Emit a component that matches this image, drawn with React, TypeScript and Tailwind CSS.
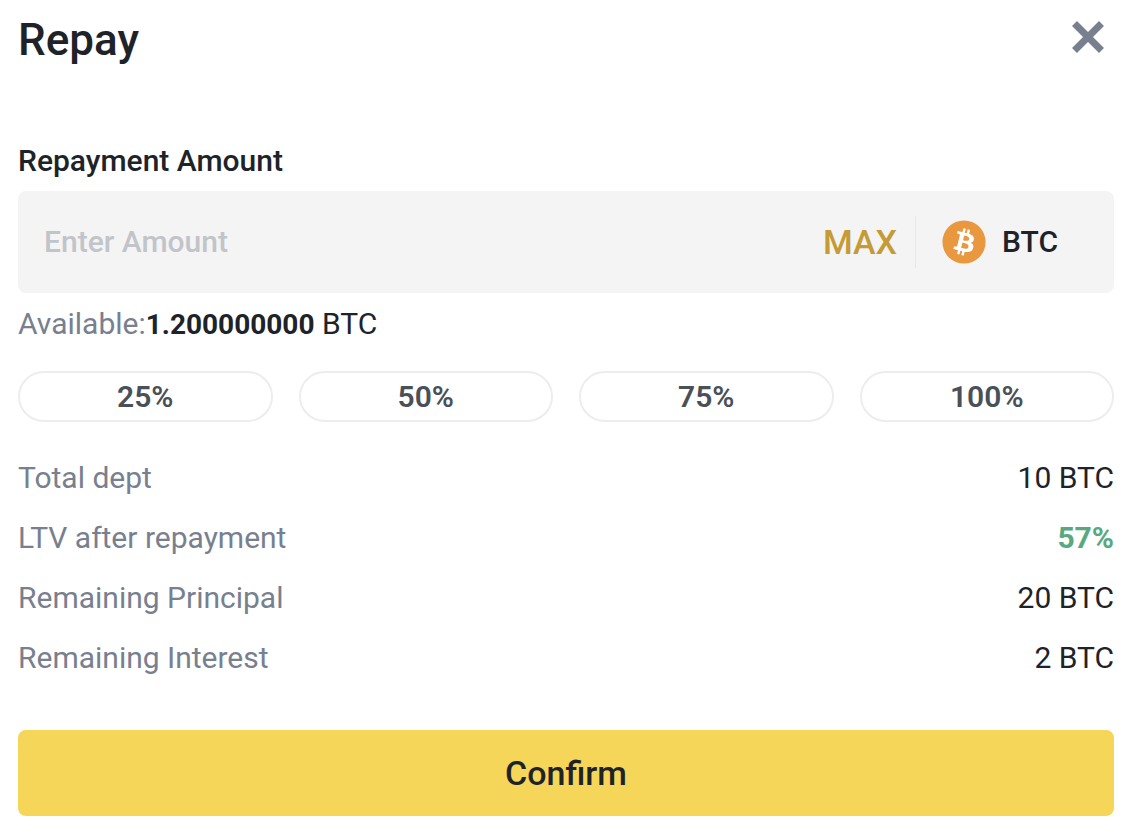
import { useState } from 'react';

const AVAILABLE = 1.2;

const percentages = [25, 50, 75, 100];

const summary = [
  { label: 'Total dept', value: '10 BTC' },
  { label: 'LTV after repayment', value: '57%', highlight: true },
  { label: 'Remaining Principal', value: '20 BTC' },
  { label: 'Remaining Interest', value: '2 BTC' },
];

function CloseIcon() {
  return (
    <svg viewBox="0 0 32 32" className="size-8" fill="none" stroke="currentColor" strokeWidth="7" aria-hidden="true">
      <path d="M2.5 2.5 29.5 29.5M29.5 2.5 2.5 29.5" />
    </svg>
  );
}

function BitcoinIcon() {
  return (
    <svg viewBox="0 0 32 32" className="size-11" aria-hidden="true">
      <circle cx="16" cy="16" r="15.7" fill="#e9983f" />
      <path
        fill="#fff"
        d="M23.189 14.02c.314-2.096-1.283-3.223-3.465-3.975l.708-2.84-1.728-.43-.69 2.765c-.454-.114-.92-.22-1.385-.326l.695-2.783L15.596 6l-.708 2.839c-.376-.086-.746-.17-1.104-.26l.002-.009-2.384-.595-.46 1.846s1.283.294 1.256.312c.7.175.826.638.805 1.006l-.806 3.235c.048.012.11.03.18.057l-.183-.045-1.13 4.532c-.086.212-.303.531-.793.41.018.025-1.256-.313-1.256-.313l-.858 1.978 2.25.561c.418.105.828.215 1.231.318l-.715 2.872 1.727.43.708-2.84c.472.127.93.245 1.378.357l-.706 2.828 1.728.43.715-2.866c2.948.558 5.164.333 6.097-2.333.752-2.146-.037-3.385-1.588-4.192 1.13-.26 1.98-1.003 2.207-2.538zm-3.95 5.538c-.533 2.147-4.148.986-5.32.695l.95-3.805c1.172.293 4.929.872 4.37 3.11zm.535-5.569c-.487 1.953-3.495.96-4.47.717l.86-3.45c.975.243 4.118.696 3.61 2.733z"
      />
    </svg>
  );
}

export default function App() {
  const [amount, setAmount] = useState('');

  const fillPercent = (percent: number) => {
    setAmount(String((AVAILABLE * percent) / 100));
  };

  return (
    <main className="min-h-screen bg-white pt-2.5 pr-5 pb-[18px] pl-[18px] font-['Roboto',sans-serif] text-[30px] leading-10 text-[#1e2329]">
      <header className="flex items-start justify-between">
        <h1 className="text-[44px] leading-[60px] font-medium">Repay</h1>
        <button type="button" aria-label="Close" className="mt-[11px] mr-2.5 text-[#78808f]">
          <CloseIcon />
        </button>
      </header>

      <form onSubmit={(e) => e.preventDefault()}>
        {/* Amount */}
        <label htmlFor="amount" className="mt-[71px] block font-medium">
          Repayment Amount
        </label>
        <div className="mt-2.5 flex h-[102px] items-center rounded-lg bg-[#f4f4f4] pr-14 pl-[26px]">
          <input
            id="amount"
            type="text"
            inputMode="decimal"
            placeholder="Enter Amount"
            value={amount}
            onChange={(e) => setAmount(e.target.value)}
            className="min-w-0 flex-1 bg-transparent font-medium outline-none placeholder:text-[#c1c4c9]"
          />
          <button type="button" onClick={() => fillPercent(100)} className="text-[34px] font-medium text-[#c49b36]">
            MAX
          </button>
          <div className="ml-[18px] h-[52px] w-px bg-[#e6e8ea]" />
          <div className="ml-[26px] flex items-center gap-4 font-medium">
            <BitcoinIcon />
            BTC
          </div>
        </div>

        <p className="mt-[11px]">
          <span className="text-[#78808f]">Available:</span>
          <span className="text-[28px] font-bold">1.200000000</span> BTC
        </p>

        {/* Quick fill */}
        <div className="mt-[26px] grid grid-cols-4 gap-[26px]">
          {percentages.map((percent) => (
            <button
              key={percent}
              type="button"
              onClick={() => fillPercent(percent)}
              className="h-[51px] rounded-full border-2 border-[#ededee] font-semibold text-[#4a5058]"
            >
              {percent}%
            </button>
          ))}
        </div>

        {/* Summary */}
        <dl className="mt-[26px] flex flex-col">
          {summary.map(({ label, value, highlight }) => (
            <div key={label} className="flex items-center justify-between py-2.5">
              <dt className="text-[#78808f]">{label}</dt>
              <dd className={highlight ? 'font-bold text-[#58a881]' : ''}>{value}</dd>
            </div>
          ))}
        </dl>

        <button type="submit" className="mt-[42px] h-[86px] w-full rounded-lg bg-[#f5d658] text-[34px] font-medium">
          Confirm
        </button>
      </form>
    </main>
  );
}
